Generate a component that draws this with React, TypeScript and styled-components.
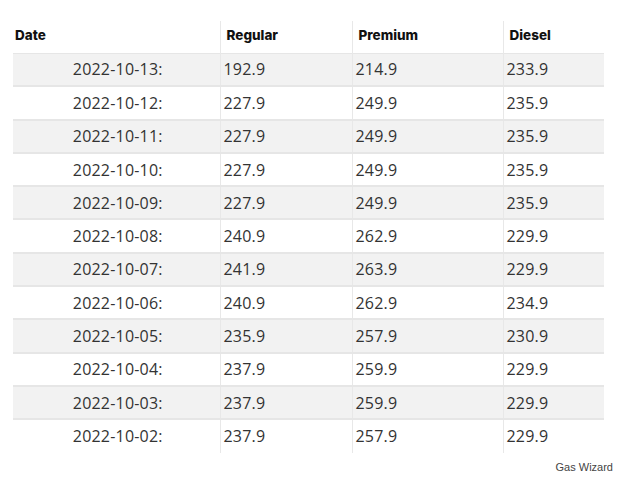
import React from "react";
import styled, { createGlobalStyle } from "styled-components";

const Global = createGlobalStyle`
  html, body { margin: 0; padding: 0; background: #fff; }
  body { font-family: "Open Sans", "Liberation Sans", sans-serif; }
`;

const Page = styled.div`
  width: 637px;
  padding: 21px 0 0 13px;
  box-sizing: border-box;
`;

const Table = styled.table`
  border-collapse: collapse;
  width: 591px;
  table-layout: fixed;
`;

const Th = styled.th<{ $w: number }>`
  width: ${(p) => p.$w}px;
  height: 32px;
  text-align: left;
  padding: 0 0 3px 6px;
  font-family: "Inter", "Liberation Sans", sans-serif;
  font-weight: 800;
  font-size: 13.5px;
  color: #111;
  border-left: 1px solid #e8e8e8;
  &:first-child { border-left: none; padding-left: 2px; }
  box-sizing: border-box;
`;

const Tr = styled.tr<{ $shade: boolean }>`
  background: ${(p) => (p.$shade ? "#f2f2f2" : "#fff")};
  border-top: 2px solid #e6e6e6;
  &:first-child { border-top: 1px solid #e6e6e6; }
`;

const Td = styled.td<{ $center?: boolean }>`
  height: 33.3px;
  padding: 0 0 0 3px;
  text-align: ${(p) => (p.$center ? "center" : "left")};
  font-size: 16px;
  letter-spacing: 0.2px;
  color: #333;
  border-left: 1px solid #e8e8e8;
  &:first-child { border-left: none; }
  box-sizing: border-box;
`;

const Credit = styled.div`
  width: 600px;
  text-align: right;
  margin-top: 8px;
  font-family: "Liberation Sans", sans-serif;
  font-size: 11px;
  color: #444;
`;

const rows: [string, string, string, string][] = [
  ["2022-10-13:", "192.9", "214.9", "233.9"],
  ["2022-10-12:", "227.9", "249.9", "235.9"],
  ["2022-10-11:", "227.9", "249.9", "235.9"],
  ["2022-10-10:", "227.9", "249.9", "235.9"],
  ["2022-10-09:", "227.9", "249.9", "235.9"],
  ["2022-10-08:", "240.9", "262.9", "229.9"],
  ["2022-10-07:", "241.9", "263.9", "229.9"],
  ["2022-10-06:", "240.9", "262.9", "234.9"],
  ["2022-10-05:", "235.9", "257.9", "230.9"],
  ["2022-10-04:", "237.9", "259.9", "229.9"],
  ["2022-10-03:", "237.9", "259.9", "229.9"],
  ["2022-10-02:", "237.9", "257.9", "229.9"],
];

export default function App() {
  return (
    <Page>
      <Global />
      <Table>
        <thead>
          <tr>
            <Th $w={207}>Date</Th>
            <Th $w={132}>Regular</Th>
            <Th $w={151}>Premium</Th>
            <Th $w={101}>Diesel</Th>
          </tr>
        </thead>
        <tbody>
          {rows.map((r, i) => (
            <Tr key={r[0]} $shade={i % 2 === 0}>
              <Td $center>{r[0]}</Td>
              <Td>{r[1]}</Td>
              <Td>{r[2]}</Td>
              <Td>{r[3]}</Td>
            </Tr>
          ))}
        </tbody>
      </Table>
      <Credit>Gas Wizard</Credit>
    </Page>
  );
}
